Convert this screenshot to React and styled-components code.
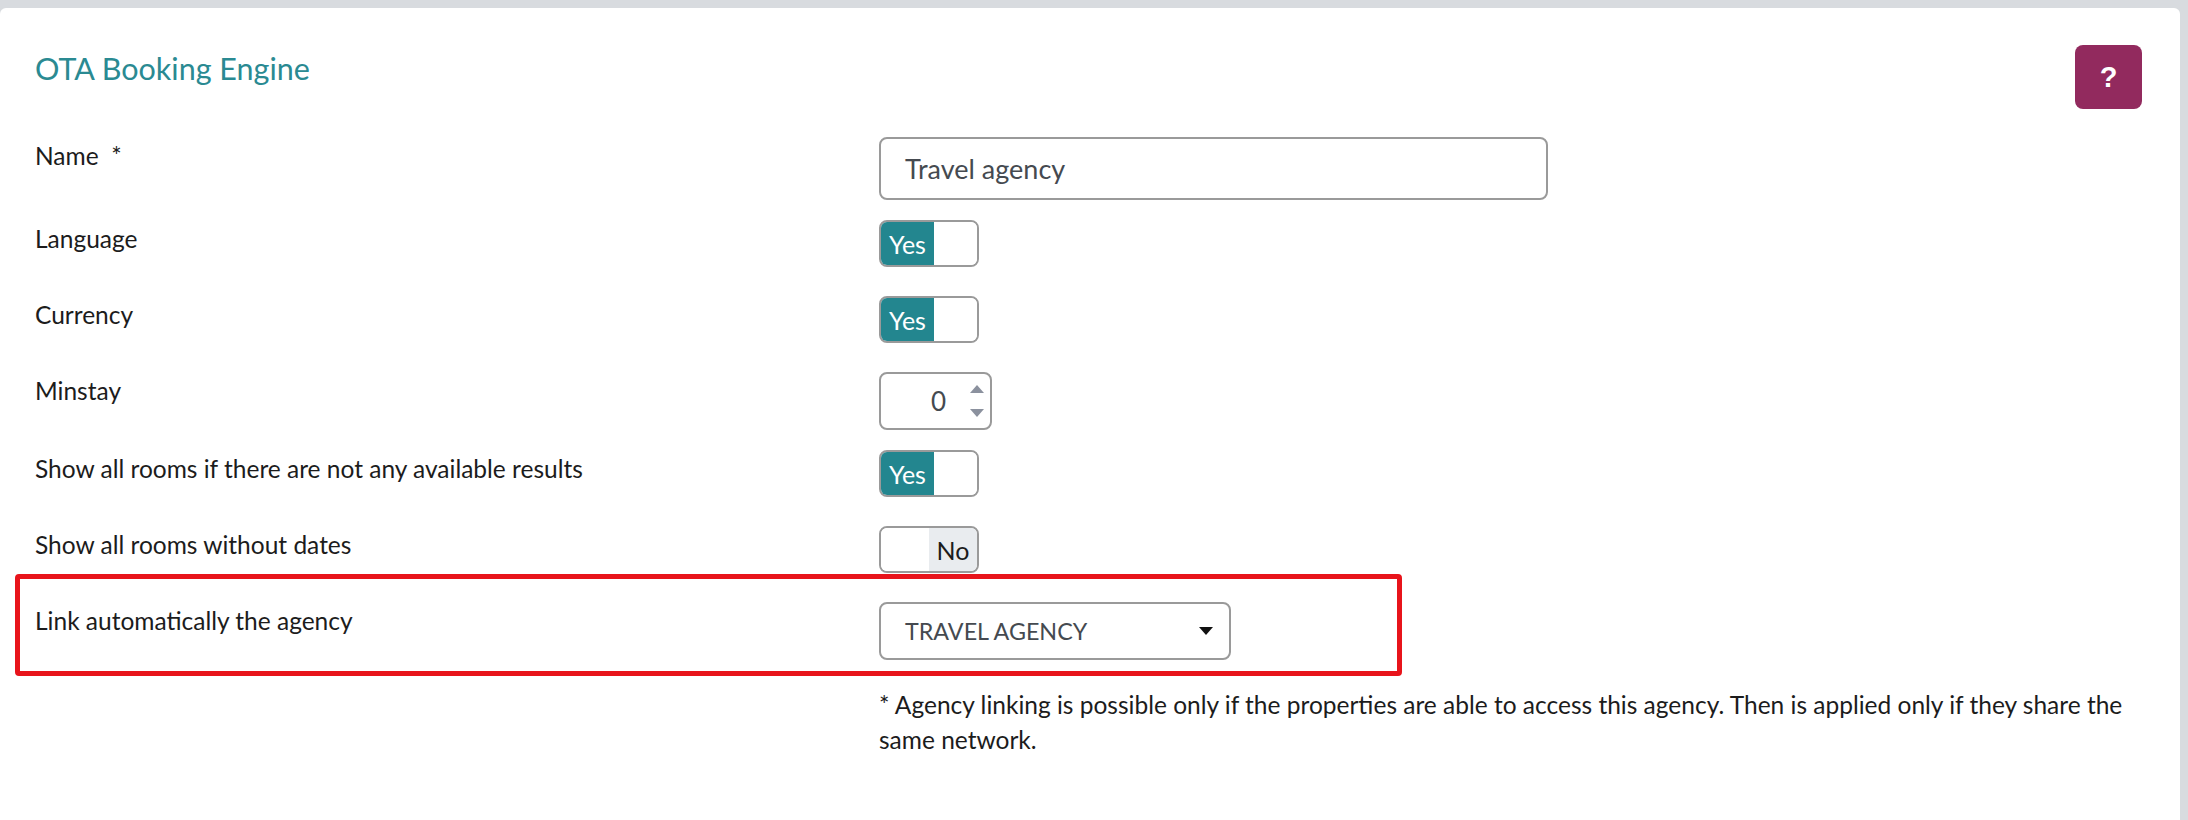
import React from 'react';
import styled, { createGlobalStyle } from 'styled-components';

const GlobalStyle = createGlobalStyle`
    html, body {
        margin: 0;
        padding: 0;
        background: #d8dbdf;
    }
    body {
        font-family: Lato, "Open Sans", sans-serif;
        color: #212529;
    }
`;

const Page = styled.div`
    padding: 8px 8px 0 0;
    min-height: 812px;
`;

const Card = styled.div`
    background: #ffffff;
    border-radius: 6px 6px 0 0;
    min-height: 812px;
    padding: 37px 38px 0 35px;
    box-sizing: border-box;
`;

const Header = styled.div`
    display: flex;
    justify-content: space-between;
    align-items: flex-start;
`;

const Title = styled.h2`
    margin: 0;
    padding-top: 5px;
    font-family: Lato, sans-serif;
    font-weight: 400;
    font-size: 30.5px;
    line-height: 36px;
    color: #2a8a92;
`;

const HelpButton = styled.button`
    width: 67px;
    height: 64px;
    border: none;
    border-radius: 8px;
    background: #922a5e;
    color: #ffffff;
    font-family: "Liberation Sans", Arial, sans-serif;
    font-weight: 700;
    font-size: 29px;
    display: flex;
    align-items: center;
    justify-content: center;
    padding: 0;
`;

const Form = styled.div`
    margin-top: 28px;
`;

const Row = styled.div`
    position: relative;
    display: grid;
    grid-template-columns: 844px 1fr;
    min-height: 56px;
    margin-bottom: 20px;
`;

const Label = styled.div`
    padding-top: 4px;
    font-size: 24.5px;
    line-height: 30px;
    color: #1c1c1c;
`;

const TextInput = styled.div`
    width: 669px;
    height: 63px;
    box-sizing: border-box;
    border: 2px solid #9a9a9a;
    border-radius: 8px;
    padding: 0 24px;
    display: flex;
    align-items: center;
    font-size: 27px;
    color: #454a50;
`;

const Toggle = styled.div`
    width: 100px;
    height: 47px;
    box-sizing: border-box;
    border: 2px solid #9a9a9a;
    border-radius: 8px;
    overflow: hidden;
    display: flex;
`;

const TogglePart = styled.span`
    width: ${p => p.$w}px;
    height: 100%;
    display: flex;
    align-items: center;
    justify-content: center;
    font-size: 25px;
    background: ${p => p.$bg};
    color: ${p => p.$color};
`;

const NumberBox = styled.div`
    width: 113px;
    height: 58px;
    box-sizing: border-box;
    border: 2px solid #9a9a9a;
    border-radius: 8px;
    display: flex;
    align-items: center;
    justify-content: flex-end;
    padding-right: 6px;
    font-size: 26px;
    color: #454a50;
`;

const Spin = styled.div`
    display: flex;
    flex-direction: column;
    gap: 16px;
    margin-left: 24px;
`;

const SelectBox = styled.div`
    width: 352px;
    height: 58px;
    box-sizing: border-box;
    border: 2px solid #9a9a9a;
    border-radius: 8px;
    display: flex;
    align-items: center;
    justify-content: space-between;
    padding: 0 16px 0 24px;
    font-size: 23.3px;
    color: #454a50;
    text-transform: uppercase;
`;

const Highlight = styled.div`
    position: absolute;
    left: -20px;
    top: -28px;
    width: 1387px;
    height: 102px;
    box-sizing: border-box;
    border: 5px solid #e8141b;
    border-radius: 4px;
    pointer-events: none;
`;

const Note = styled.p`
    grid-column: 2;
    margin: 0;
    padding-top: 27px;
    font-size: 24.5px;
    line-height: 35px;
    color: #1c1c1c;
`;

const Switch = ({ on }) => (
    <Toggle>
        {on ? (
            <>
                <TogglePart $w={53} $bg="#23868f" $color="#fff">Yes</TogglePart>
                <TogglePart $w={43} $bg="#fff" $color="#fff" />
            </>
        ) : (
            <>
                <TogglePart $w={48} $bg="#fff" $color="#fff" />
                <TogglePart $w={48} $bg="#e9ecef" $color="#1c1c1c">No</TogglePart>
            </>
        )}
    </Toggle>
);

const App = () => {
    return (
        <Page>
            <GlobalStyle />
            <Card>
                <Header>
                    <Title>OTA Booking Engine</Title>
                    <HelpButton>?</HelpButton>
                </Header>
                <Form>
                    <Row>
                        <Label>Name&nbsp; *</Label>
                        <TextInput>Travel agency</TextInput>
                    </Row>
                    <Row>
                        <Label>Language</Label>
                        <Switch on />
                    </Row>
                    <Row>
                        <Label>Currency</Label>
                        <Switch on />
                    </Row>
                    <Row>
                        <Label>Minstay</Label>
                        <NumberBox>
                            0
                            <Spin>
                                <svg width="14" height="8" viewBox="0 0 14 8"><path d="M7 0 L14 8 L0 8 Z" fill="#8b919e" /></svg>
                                <svg width="14" height="8" viewBox="0 0 14 8"><path d="M0 0 L14 0 L7 8 Z" fill="#8b919e" /></svg>
                            </Spin>
                        </NumberBox>
                    </Row>
                    <Row>
                        <Label>Show all rooms if there are not any available results</Label>
                        <Switch on />
                    </Row>
                    <Row>
                        <Label>Show all rooms without dates</Label>
                        <Switch />
                    </Row>
                    <Row style={{ marginBottom: 0 }}>
                        <Highlight />
                        <Label>Link automatically the agency</Label>
                        <SelectBox>
                            Travel agency
                            <svg width="14" height="8" viewBox="0 0 14 8"><path d="M0 0 L14 0 L7 8 Z" fill="#111" /></svg>
                        </SelectBox>
                    </Row>
                    <Row>
                        <Note>
                            * Agency linking is possible only if the properties are able to access this agency. Then is applied only if they share the same network.
                        </Note>
                    </Row>
                </Form>
            </Card>
        </Page>
    );
};

export default App;
